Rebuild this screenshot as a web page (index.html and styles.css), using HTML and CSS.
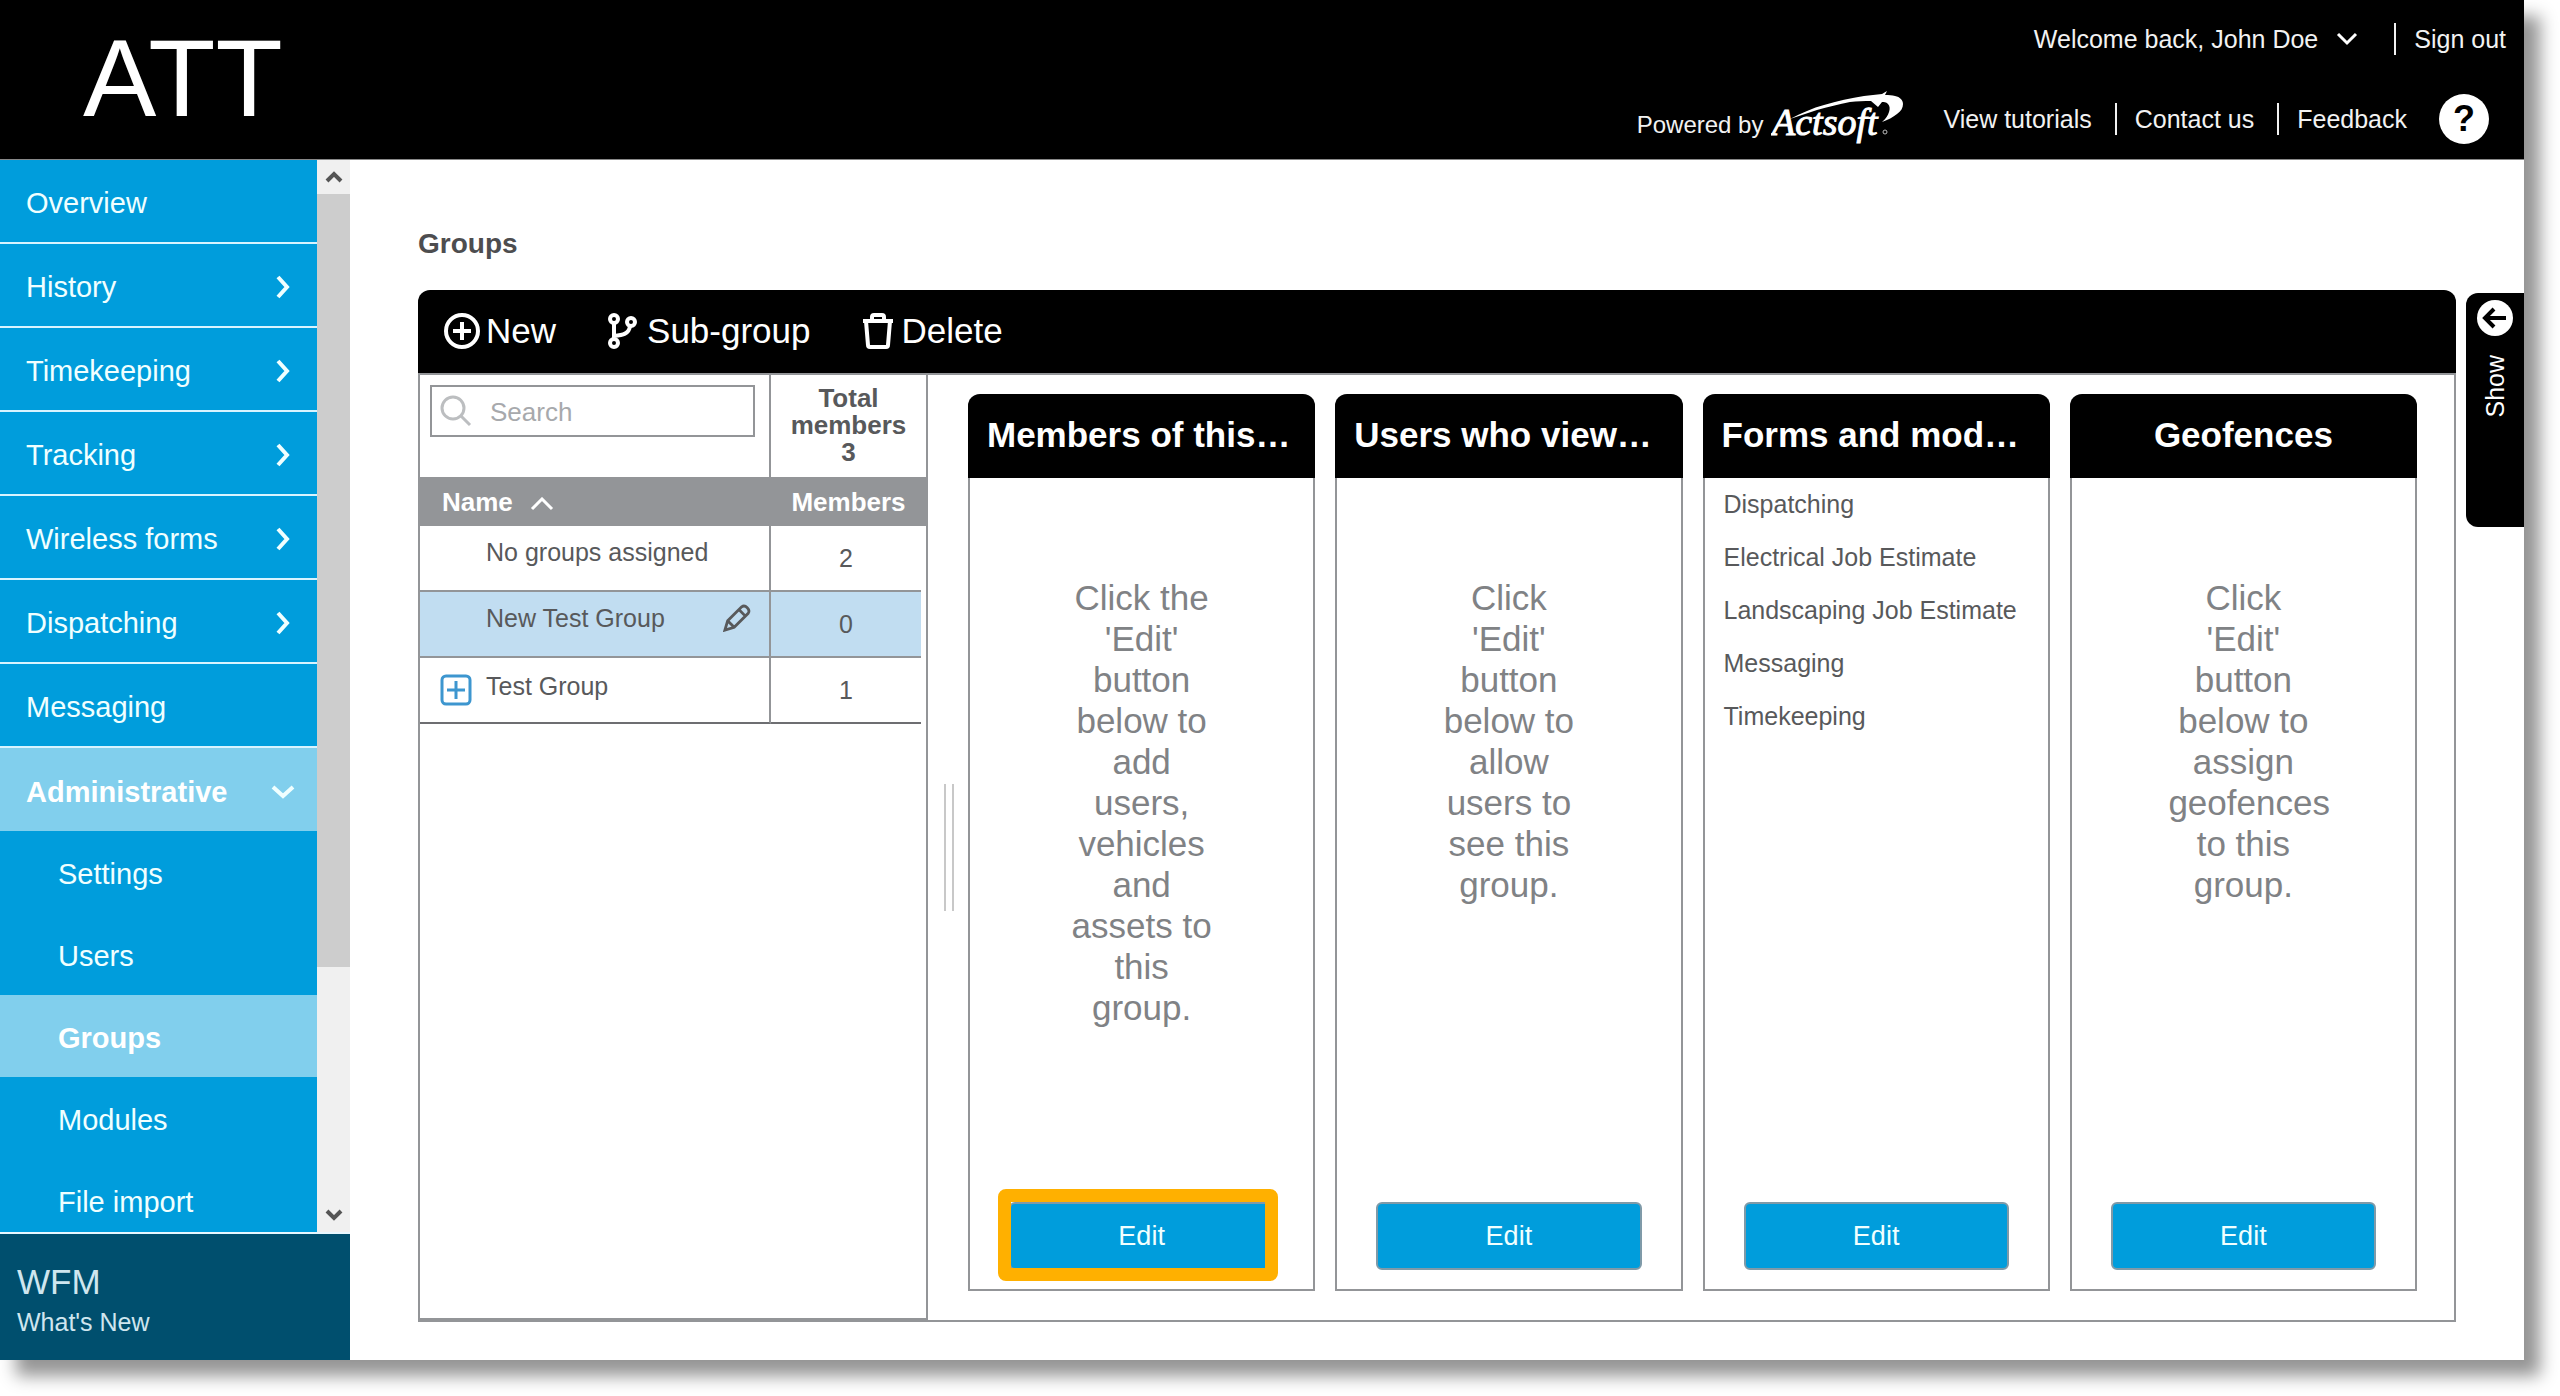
FILE: index.html
```html
<!DOCTYPE html>
<html lang="en">
<head>
<meta charset="utf-8">
<title>Groups</title>
<link rel="stylesheet" href="styles.css">
</head>
<body>
<div class="window">
  <header class="top">
    <div class="brand">ATT</div>
    <div class="top-links">
      <div class="account">
        <button class="welcome" type="button">Welcome back, John Doe
          <svg width="22" height="14" viewBox="0 0 22 14"><path d="M2 2l9 9 9-9" fill="none" stroke="#fff" stroke-width="3"/></svg>
        </button>
        <a class="ruled" href="#">Sign out</a>
      </div>
      <div class="support">
        <span class="powered">Powered by</span>
        <svg class="logo" width="136" height="56" viewBox="0 0 136 56" role="img" aria-label="Actsoft">
          <text x="1" y="44" class="logo-text">Actsoft</text>
          <path d="M19 28C30 22 42 17 53 14 66 10 80 7 93 5L111 3l5-3-2 4c4 0 7 0 10 1 5 1 8 4 8 8 0 4-2 7-6 10-4 3-9 6-15 8 4-3 6-7 7-10 1-3 1-6-1-8-2-2-4-2-6-2l-4 5-7-6c-7 0-14 0-21 1-11 2-22 5-33 8-9 3-18 6-27 9z" fill="#fff"/>
          <circle cx="114" cy="41" r="2" fill="none" stroke="#bbb"/>
        </svg>
        <nav class="help-links" aria-label="Support">
          <a href="#">View tutorials</a>
          <a class="ruled" href="#">Contact us</a>
          <a class="ruled" href="#">Feedback</a>
        </nav>
        <button class="help" type="button" aria-label="Help">?</button>
      </div>
    </div>
  </header>

  <div class="body">
    <aside class="side">
      <div class="side-scroll">
        <nav class="menu" aria-label="Main">
          <a href="#">Overview</a>
          <a class="more" href="#">History<svg width="16" height="24" viewBox="0 0 16 24"><path d="M3 2l9 10-9 10"/></svg></a>
          <a class="more" href="#">Timekeeping<svg width="16" height="24" viewBox="0 0 16 24"><path d="M3 2l9 10-9 10"/></svg></a>
          <a class="more" href="#">Tracking<svg width="16" height="24" viewBox="0 0 16 24"><path d="M3 2l9 10-9 10"/></svg></a>
          <a class="more" href="#">Wireless forms<svg width="16" height="24" viewBox="0 0 16 24"><path d="M3 2l9 10-9 10"/></svg></a>
          <a class="more" href="#">Dispatching<svg width="16" height="24" viewBox="0 0 16 24"><path d="M3 2l9 10-9 10"/></svg></a>
          <a href="#">Messaging</a>
          <a class="more open" href="#">Administrative<svg width="24" height="16" viewBox="0 0 24 16"><path d="M2 3l10 9 10-9"/></svg></a>
          <a class="sub" href="#">Settings</a>
          <a class="sub" href="#">Users</a>
          <a class="sub current" href="#">Groups</a>
          <a class="sub" href="#">Modules</a>
          <a class="sub" href="#">File import</a>
        </nav>
        <div class="scrollbar" aria-hidden="true">
          <div class="arrow"><svg width="18" height="14" viewBox="0 0 18 14"><path d="M2 11l7-7 7 7"/></svg></div>
          <div class="track"><div class="thumb"></div></div>
          <div class="arrow"><svg width="18" height="14" viewBox="0 0 18 14"><path d="M2 3l7 7 7-7"/></svg></div>
        </div>
      </div>
      <footer class="news">
        <div class="news-name">WFM</div>
        <a href="#">What's New</a>
      </footer>
    </aside>

    <main class="content">
      <h1>Groups</h1>
      <div class="work">
        <section class="panel">
          <div class="toolbar">
            <button type="button">
              <svg width="36" height="36" viewBox="0 0 36 36"><circle cx="18" cy="18" r="16"/><path d="M18 9v18M9 18h18"/></svg>
              New
            </button>
            <button type="button" class="wide-icon">
              <svg width="30" height="36" viewBox="0 0 30 36"><circle cx="7" cy="6" r="4"/><circle cx="7" cy="30" r="4"/><circle cx="24" cy="9" r="4"/><path d="M7 10v16M23 13c-1 8-7 9-16 10"/></svg>
              Sub-group
            </button>
            <button type="button">
              <svg width="34" height="36" viewBox="0 0 34 36"><path d="M2 8h30M11 8V4q0-2 2-2h8q2 0 2 2v4M5 8l2 24q0 2 2 2h16q2 0 2-2l2-24"/></svg>
              Delete
            </button>
          </div>
          <div class="panes">
            <div class="groups">
              <table>
                <colgroup><col><col class="col-members"><col class="col-edge"></colgroup>
                <thead>
                  <tr class="filters">
                    <td>
                      <label class="search">
                        <svg width="32" height="32" viewBox="0 0 32 32"><circle cx="13" cy="13" r="11"/><path d="M21 21l9 9"/></svg>
                        <input type="text" placeholder="Search" aria-label="Search">
                      </label>
                    </td>
                    <td class="total" colspan="2">Total members<br>3</td>
                  </tr>
                  <tr class="heads">
                    <th class="name-head">Name <svg width="24" height="14" viewBox="0 0 24 14"><path d="M2 12L12 2l10 10"/></svg></th>
                    <th colspan="2">Members</th>
                  </tr>
                </thead>
                <tbody>
                  <tr><td class="name">No groups assigned</td><td class="count">2</td></tr>
                  <tr class="selected">
                    <td class="name"><div class="name-row">New Test Group
                      <button type="button" aria-label="Rename group"><svg width="28" height="28" viewBox="0 0 30 30"><path d="M2 28l3-10L20 3q3-2 6 1t1 6L12 25zM5 18l7 7M17 6l7 7"/></svg></button></div>
                    </td>
                    <td class="count">0</td>
                  </tr>
                  <tr>
                    <td class="name has-children"><div class="name-row">
                      <button type="button" aria-label="Expand Test Group"><svg width="32" height="32" viewBox="0 0 32 32"><rect x="2" y="2" width="28" height="28" rx="4"/><path d="M16 7v18M7 16h18"/></svg></button>
                      Test Group</div>
                    </td>
                    <td class="count">1</td>
                  </tr>
                </tbody>
              </table>
            </div>
            <div class="splitter"></div>
            <div class="cards">
              <article class="card">
                <h2 class="shortened">Members of this…</h2>
                <p>Click the 'Edit' button below to add users, vehicles and assets to this group.</p>
                <div class="action marked"><button type="button">Edit</button></div>
              </article>
              <article class="card">
                <h2 class="shortened">Users who view…</h2>
                <p>Click 'Edit' button below to allow users to see this group.</p>
                <div class="action"><button type="button">Edit</button></div>
              </article>
              <article class="card">
                <h2 class="shortened">Forms and mod…</h2>
                <ul>
                  <li>Dispatching</li>
                  <li>Electrical Job Estimate</li>
                  <li>Landscaping Job Estimate</li>
                  <li>Messaging</li>
                  <li>Timekeeping</li>
                </ul>
                <div class="action"><button type="button">Edit</button></div>
              </article>
              <article class="card">
                <h2>Geofences</h2>
                <p>Click 'Edit' button below to assign geofences to this group.</p>
                <div class="action"><button type="button">Edit</button></div>
              </article>
            </div>
          </div>
        </section>
        <button class="show" type="button">
          <svg width="38" height="38" viewBox="0 0 38 38"><circle cx="19" cy="19" r="18" fill="#fff"/><path d="M30 19H10M18 10l-9 9 9 9" fill="none" stroke="#000" stroke-width="4"/></svg>
          <span>Show</span>
        </button>
      </div>
    </main>
  </div>
</div>
</body>
</html>
```
FILE: styles.css
```css
* { box-sizing: border-box; }

body {
  display: flex;
  height: 100vh;
  margin: 0;
  padding: 0 36px 36px 0;
  background: #fff;
  color: #58595b;
  font: 25px/32px "Liberation Sans", Arial, sans-serif;
}

button {
  padding: 0;
  border: 0;
  background: none;
  color: inherit;
  font: inherit;
}

a { color: inherit; text-decoration: none; }
svg { display: block; flex: none; }

.window {
  display: flex;
  flex: 1;
  flex-direction: column;
  min-width: 0;
  background: #fff;
  box-shadow: 16px 16px 16px rgba(0, 0, 0, .42);
}

/* Header */
.top {
  display: flex;
  justify-content: space-between;
  height: 160px;
  flex: none;
  border-bottom: 1px solid #888;
  background: #000;
  color: #f2f2f2;
}

.brand {
  padding: 14px 0 0 83px;
  color: #fff;
  font-size: 110px;
  line-height: 128px;
}

.top-links {
  display: flex;
  flex-direction: column;
  align-items: flex-end;
  padding-top: 23px;
}

.account, .welcome, .support, .help-links {
  display: flex;
  align-items: center;
}

.account { gap: 36px; padding-right: 18px; }
.welcome { gap: 18px; }
.ruled { padding-left: 18px; border-left: 2px solid #f2f2f2; }
.support { margin-top: 36px; padding-right: 35px; height: 56px; }
.powered { padding: 12px 8px 0 0; font-size: 24px; }
.logo { margin-right: 36px; }

.logo-text {
  fill: #fff;
  stroke: #fff;
  stroke-width: 1;
  font: italic 38px "Liberation Serif", "Times New Roman", serif;
}

.help-links { gap: 23px; }

.help {
  width: 50px;
  height: 50px;
  margin-left: 32px;
  border-radius: 50%;
  background: #fff;
  color: #000;
  font-size: 36px;
  font-weight: bold;
}

/* Sidebar */
.body { display: flex; flex: 1; min-height: 0; }

.side {
  display: flex;
  flex-direction: column;
  width: 350px;
  flex: none;
}

.side-scroll { display: flex; flex: 1; min-height: 0; }

.menu {
  flex: 1;
  overflow: hidden;
  background: #009ddc;
  color: #f0ffff;
  font-size: 29px;
}

.menu a {
  display: flex;
  align-items: center;
  justify-content: space-between;
  height: 84px;
  padding: 4px 26px 0;
  border-bottom: 2px solid #d8f4ff;
}

.menu svg { fill: none; stroke: #f0ffff; stroke-width: 4; }

.menu .open, .menu .current {
  background: #81cfed;
  color: #fff;
  font-weight: bold;
}

.menu .open { height: 83px; padding-right: 22px; border-bottom: 0; }
.menu .sub { height: 82px; padding-left: 58px; border-bottom: 0; }

.scrollbar {
  display: flex;
  flex-direction: column;
  width: 33px;
  background: #f0f0f0;
}

.arrow { display: grid; place-items: center; height: 34px; }
.arrow svg { fill: none; stroke: #555; stroke-width: 4; }
.track { flex: 1; }
.thumb { height: 77%; background: #cdcdcd; }

.news {
  height: 128px;
  padding: 28px 17px 0;
  border-top: 2px solid #e8f8ff;
  background: #004f6e;
  color: #cfe6ef;
}

.news-name { font-size: 35px; line-height: 40px; }
.news a { display: block; line-height: 40px; }

/* Main area */
.content {
  display: flex;
  flex: 1;
  flex-direction: column;
  min-width: 0;
  padding: 68px 0 38px 68px;
}

h1 {
  margin: 0 0 30px;
  color: #4d4d4f;
  font-size: 28px;
  line-height: 32px;
}

.work { display: flex; flex: 1; align-items: flex-start; gap: 10px; min-height: 0; }

.panel {
  display: flex;
  flex: 1;
  flex-direction: column;
  align-self: stretch;
  min-width: 0;
}

.toolbar {
  display: flex;
  align-items: center;
  gap: 51px;
  height: 83px;
  padding: 0 26px 2px;
  border-radius: 12px 12px 0 0;
  background: #000;
  color: #fff;
  font-size: 35px;
}

.toolbar button { display: flex; align-items: center; gap: 6px; }
.toolbar .wide-icon { gap: 10px; }
.toolbar svg { fill: none; stroke: #fff; stroke-width: 4; }

.panes {
  display: flex;
  flex: 1;
  min-height: 0;
  border: 2px solid #939598;
}

.groups {
  width: 508px;
  flex: none;
  border-right: 2px solid #939598;
  border-bottom: 2px solid #939598;
}

table { width: 100%; border-collapse: separate; border-spacing: 0; table-layout: fixed; }
td, th { padding: 0; }
.col-members { width: 150px; }
.col-edge { width: 5px; }
.filters td { height: 102px; vertical-align: top; }
.filters td:first-child { padding: 10px 14px 0 10px; border-right: 2px solid #939598; }

.search {
  display: flex;
  align-items: center;
  gap: 18px;
  height: 52px;
  padding-left: 8px;
  border: 2px solid #939598;
}

.search svg { fill: none; stroke: #bcbec0; stroke-width: 3; }

.search input {
  width: 100%;
  min-width: 0;
  padding: 2px 0 0;
  border: 0;
  outline: 0;
  background: none;
  font: inherit;
  font-size: 26px;
}

.search input::placeholder { color: #a7a9ac; opacity: 1; }
.filters .total { padding: 10px 16px 0; text-align: center; font-size: 26px; font-weight: bold; line-height: 27px; }

.heads th {
  height: 49px;
  background: #939598;
  color: #fff;
  font-size: 26px;
}

.heads .name-head { padding-left: 22px; text-align: left; }
.name-head svg { display: inline-block; margin-left: 10px; fill: none; stroke: #fff; stroke-width: 3; }
tbody td { height: 66px; border-bottom: 2px solid #939598; }
tbody .name { padding: 0 18px 12px 66px; border-right: 2px solid #939598; }
tbody tr:last-child td { border-bottom-color: #6d6e71; }
tbody .count { text-align: center; }
.selected td { background: #c1ddf1; }
.name-row { display: flex; align-items: center; justify-content: space-between; }
.name-row svg { fill: none; stroke: #58595b; stroke-width: 3; }
tbody .has-children { padding: 0 18px 4px 20px; }
.has-children .name-row { align-items: flex-start; justify-content: flex-start; gap: 14px; }
.has-children button { padding-top: 4px; }
.has-children svg { stroke: #3d96cf; }

.splitter {
  align-self: center;
  width: 10px;
  height: 127px;
  margin: 0 14px 0 16px;
  border: solid #c8c8c8;
  border-width: 0 2px;
}

.cards {
  display: grid;
  flex: 1;
  grid-template-columns: repeat(4, minmax(0, 1fr));
  gap: 20px;
  min-width: 0;
  padding: 19px 37px 29px 0;
}

.card {
  display: flex;
  flex-direction: column;
  min-width: 0;
  border: solid #939598;
  border-width: 0 2px 2px;
  border-radius: 12px 12px 0 0;
}

.card h2 {
  margin: 0 -2px;
  padding: 0 19px 2px;
  border-radius: 12px 12px 0 0;
  background: #000;
  color: #fff;
  font-size: 35px;
  line-height: 82px;
  text-align: center;
  white-space: nowrap;
}

.card .shortened { text-align: left; }

.card p {
  width: 150px;
  margin: 99px auto 0;
  color: #808285;
  font-size: 35px;
  line-height: 41px;
  text-align: center;
}

.card ul { margin: 0; padding: 0 19px; list-style: none; line-height: 53px; white-space: nowrap; }
.action { position: relative; margin: auto 39px 19px; }

.action button {
  width: 100%;
  height: 68px;
  border: 2px solid #7f9aa8;
  border-radius: 6px;
  background: #009ddc;
  color: #f0ffff;
  font-size: 27px;
}

.marked::after {
  position: absolute;
  inset: -13px -4px -11px -11px;
  border: 13px solid #ffb000;
  border-radius: 8px;
  content: "";
  pointer-events: none;
}

.show {
  display: flex;
  flex-direction: column;
  align-items: center;
  gap: 18px;
  width: 58px;
  height: 234px;
  margin-top: 3px;
  padding-top: 6px;
  border-radius: 12px 0 0 12px;
  background: #000;
  color: #fff;
}

.show span { writing-mode: vertical-rl; transform: rotate(180deg); }
```
